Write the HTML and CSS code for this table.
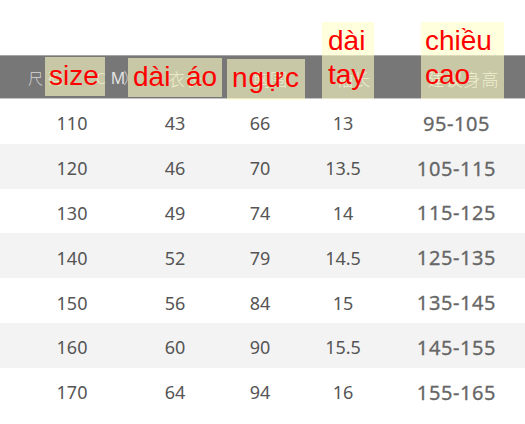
FILE: index.html
```html
<!DOCTYPE html>
<html>
<head>
<meta charset="utf-8">
<link rel="stylesheet" href="styles.css">
</head>
<body>
<div class="chart">
  <div class="top-space"></div>
  <div class="head">
    <div class="cell c1">尺码 （C<b>M</b>）</div>
    <div class="cell">衣长</div>
    <div class="cell">胸围</div>
    <div class="cell">袖长</div>
    <div class="cell c5">建议身高</div>
    <div class="tag t-size">size</div>
    <div class="tag t-dai">dài&nbsp; áo</div>
    <div class="tag t-nguc">ngực</div>
    <div class="tag tall t-tay">dài<br>tay</div>
    <div class="tag tall t-cao">chiều<br>cao</div>
  </div>
  <div class="row"><div class="cell">110</div><div class="cell">43</div><div class="cell">66</div><div class="cell">13</div><div class="cell c5">95-105</div></div>
  <div class="row alt"><div class="cell">120</div><div class="cell">46</div><div class="cell">70</div><div class="cell">13.5</div><div class="cell c5">105-115</div></div>
  <div class="row"><div class="cell">130</div><div class="cell">49</div><div class="cell">74</div><div class="cell">14</div><div class="cell c5">115-125</div></div>
  <div class="row alt"><div class="cell">140</div><div class="cell">52</div><div class="cell">79</div><div class="cell">14.5</div><div class="cell c5">125-135</div></div>
  <div class="row"><div class="cell">150</div><div class="cell">56</div><div class="cell">84</div><div class="cell">15</div><div class="cell c5">135-145</div></div>
  <div class="row alt"><div class="cell">160</div><div class="cell">60</div><div class="cell">90</div><div class="cell">15.5</div><div class="cell c5">145-155</div></div>
  <div class="row"><div class="cell">170</div><div class="cell">64</div><div class="cell">94</div><div class="cell">16</div><div class="cell c5">155-165</div></div>
</div>
</body>
</html>
```

FILE: styles.css
```css
html, body {
  margin: 0;
  padding: 0;
  background: #ffffff;
}
.chart {
  width: 525px;
  height: 424px;
  overflow: hidden;
  display: flex;
  flex-direction: column;
  font-family: "Noto Sans", "Noto Sans CJK SC", sans-serif;
}
.top-space {
  height: 55px;
  flex: none;
}
.head {
  position: relative;
  flex: none;
  height: 42px;
  background: #777777;
  border-top: 1px solid #a5a5a5;
  border-bottom: 1px solid #c4c4c4;
  display: grid;
  grid-template-columns: 154px 62px 108px 58px 1fr;
  align-items: center;
  color: #d6d6d6;
  font-family: "Noto Sans CJK SC", sans-serif;
  font-size: 17px;
  font-weight: 300;
}
.head .cell {
  text-align: center;
  padding-top: 2px;
}
.head .c1 {
  text-align: left;
  padding-left: 28px;
  font-size: 15px;
  letter-spacing: 5px;
  white-space: nowrap;
}
.head .c1 b {
  font-family: "Noto Sans", sans-serif;
  font-size: 16px;
  font-weight: 400;
  letter-spacing: -2px;
  color: #e2e2e2;
}
.head .c5 {
  padding-left: 20px;
  letter-spacing: 1px;
}
.row {
  flex: none;
  height: 44.8px;
  display: grid;
  grid-template-columns: 144px 62px 108px 58px 1fr;
  align-items: center;
  color: #555555;
  font-size: 18px;
  background: #ffffff;
}
.row.alt {
  background: #f3f3f3;
}
.row .cell {
  text-align: center;
  padding-top: 4px;
}
.row .c5 {
  padding-left: 16px;
  color: #666666;
  font-size: 20px;
  font-weight: 400;
  letter-spacing: 0.6px;
  -webkit-text-stroke: 0.3px #666666;
}
.tag {
  position: absolute;
  box-sizing: border-box;
  background: rgba(255, 255, 198, 0.6);
  color: #ff0000;
  font-family: "Liberation Sans", Arial, sans-serif;
  font-size: 28px;
  line-height: 34px;
  padding: 2px 0 0 4px;
  white-space: nowrap;
}
.t-size {
  left: 45px;
  top: 1px;
  width: 60px;
  height: 39px;
}
.t-dai {
  left: 128px;
  top: 2px;
  width: 94px;
  height: 39px;
  padding-left: 5px;
}
.t-nguc {
  left: 227px;
  top: 3px;
  width: 78px;
  height: 41px;
  padding-left: 5px;
  letter-spacing: 1px;
}
.tall {
  top: -34px;
  height: 77px;
}
.t-tay {
  left: 322px;
  width: 52px;
  padding-left: 6px;
}
.t-cao {
  left: 421px;
  width: 83px;
}
```
